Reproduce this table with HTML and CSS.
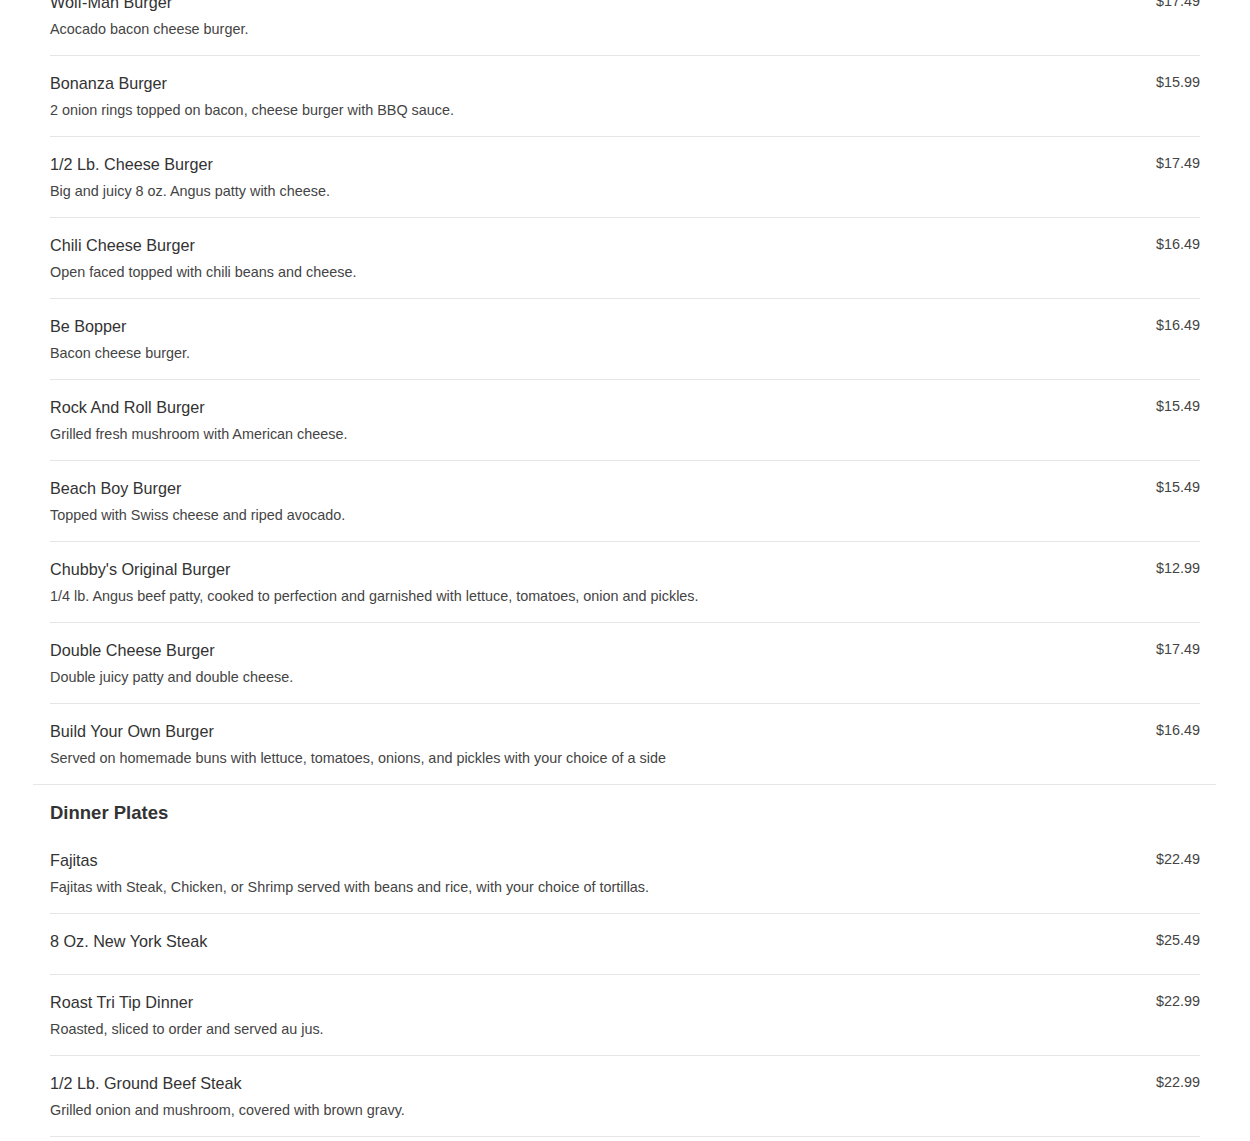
FILE: index.html
```html
<!DOCTYPE html>
<html lang="en">
<head>
<meta charset="utf-8">
<title>Menu</title>
<link rel="stylesheet" href="styles.css">
</head>
<body>
<div class="menu">
  <section class="section">
    <div class="item"><div class="info"><div class="name">Wolf-Man Burger</div><div class="desc">Acocado bacon cheese burger.</div></div><div class="price">$17.49</div></div>
    <div class="item"><div class="info"><div class="name">Bonanza Burger</div><div class="desc">2 onion rings topped on bacon, cheese burger with BBQ sauce.</div></div><div class="price">$15.99</div></div>
    <div class="item"><div class="info"><div class="name">1/2 Lb. Cheese Burger</div><div class="desc">Big and juicy 8 oz. Angus patty with cheese.</div></div><div class="price">$17.49</div></div>
    <div class="item"><div class="info"><div class="name">Chili Cheese Burger</div><div class="desc">Open faced topped with chili beans and cheese.</div></div><div class="price">$16.49</div></div>
    <div class="item"><div class="info"><div class="name">Be Bopper</div><div class="desc">Bacon cheese burger.</div></div><div class="price">$16.49</div></div>
    <div class="item"><div class="info"><div class="name">Rock And Roll Burger</div><div class="desc">Grilled fresh mushroom with American cheese.</div></div><div class="price">$15.49</div></div>
    <div class="item"><div class="info"><div class="name">Beach Boy Burger</div><div class="desc">Topped with Swiss cheese and riped avocado.</div></div><div class="price">$15.49</div></div>
    <div class="item"><div class="info"><div class="name">Chubby's Original Burger</div><div class="desc">1/4 lb. Angus beef patty, cooked to perfection and garnished with lettuce, tomatoes, onion and pickles.</div></div><div class="price">$12.99</div></div>
    <div class="item"><div class="info"><div class="name">Double Cheese Burger</div><div class="desc">Double juicy patty and double cheese.</div></div><div class="price">$17.49</div></div>
    <div class="item item-last"><div class="info"><div class="name">Build Your Own Burger</div><div class="desc">Served on homemade buns with lettuce, tomatoes, onions, and pickles with your choice of a side</div></div><div class="price">$16.49</div></div>
  </section>
  <section class="section">
    <h2 class="section-title">Dinner Plates</h2>
    <div class="item"><div class="info"><div class="name">Fajitas</div><div class="desc">Fajitas with Steak, Chicken, or Shrimp served with beans and rice, with your choice of tortillas.</div></div><div class="price">$22.49</div></div>
    <div class="item item-nodesc"><div class="info"><div class="name">8 Oz. New York Steak</div></div><div class="price">$25.49</div></div>
    <div class="item"><div class="info"><div class="name">Roast Tri Tip Dinner</div><div class="desc">Roasted, sliced to order and served au jus.</div></div><div class="price">$22.99</div></div>
    <div class="item"><div class="info"><div class="name">1/2 Lb. Ground Beef Steak</div><div class="desc">Grilled onion and mushroom, covered with brown gravy.</div></div><div class="price">$22.99</div></div>
  </section>
</div>
</body>
</html>
```
FILE: styles.css
```css
html, body {
  margin: 0;
  padding: 0;
  background: #fff;
}
body {
  font-family: "Liberation Sans", Arial, Helvetica, sans-serif;
  color: #333;
}
.menu {
  margin: -25px 34px 0 33px;
}
.section {
  border-bottom: 1px solid #e6e6e6;
  padding: 0 16px 0 17px;
}
.section:last-child {
  border-bottom: none;
}
.section-title {
  margin: 0;
  padding: 16px 0 8px;
  font-size: 18.5px;
  line-height: 24px;
  font-weight: bold;
  color: #333;
}
.item {
  display: flex;
  justify-content: space-between;
  align-items: flex-start;
  padding: 17px 0 17px;
  border-bottom: 1px solid #e6e6e6;
}
.item-last {
  border-bottom: none;
}
.item-nodesc {
  padding-bottom: 23px;
}
.name {
  font-size: 16.2px;
  line-height: 20px;
  color: #333;
}
.desc {
  margin-top: 8px;
  font-size: 14.4px;
  line-height: 18px;
  color: #444;
}
.price {
  font-size: 14.4px;
  line-height: 20px;
  margin-top: -1px;
  color: #444;
}
```
